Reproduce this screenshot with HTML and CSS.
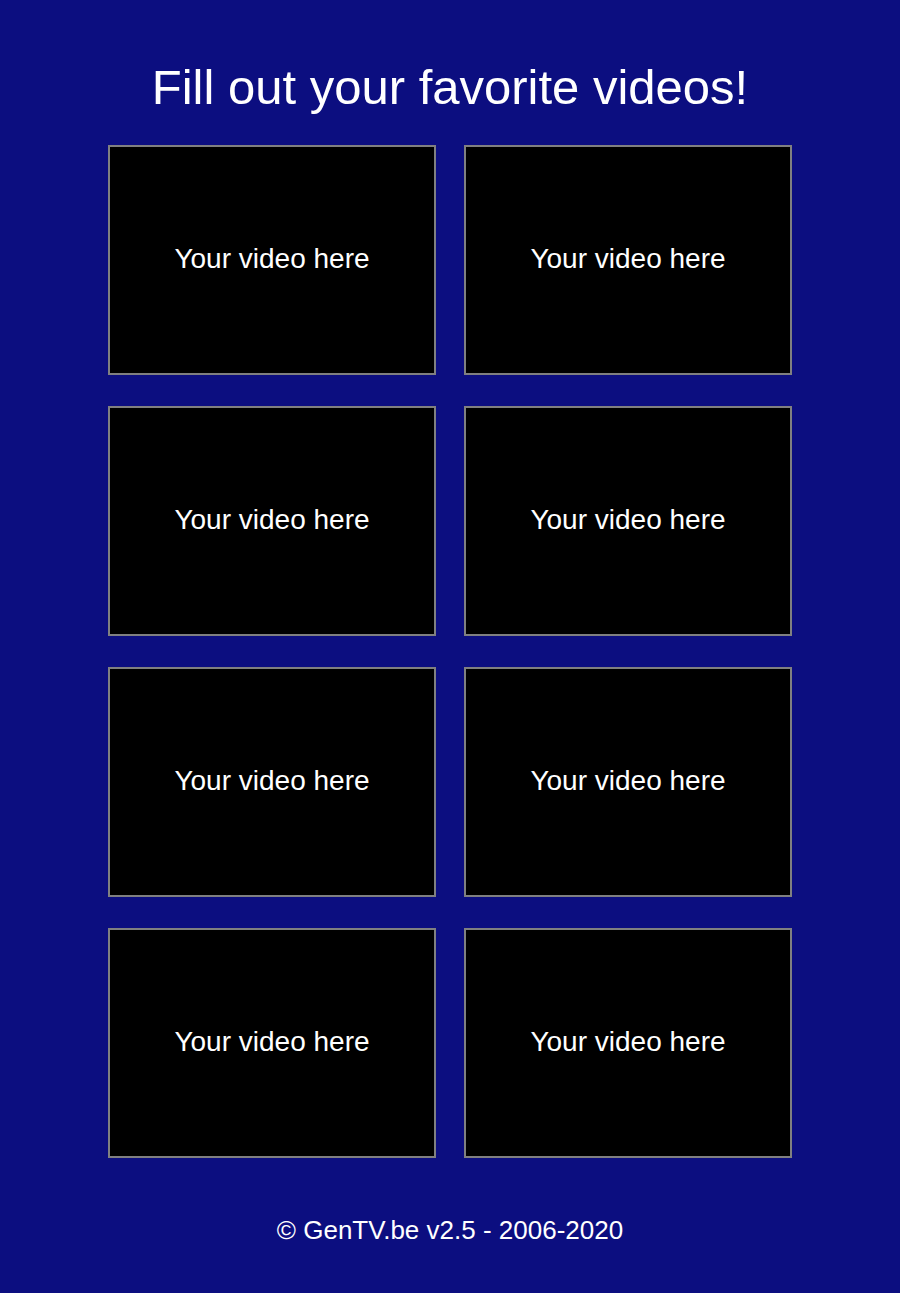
FILE: index.html
```html
<!DOCTYPE html>
<html lang="en">
<head>
<meta charset="utf-8">
<title>GenTV.be</title>
<link rel="stylesheet" href="styles.css">
</head>
<body>
<main class="page">
  <h1 class="title">Fill out your favorite videos!</h1>
  <section class="grid">
    <div class="video">Your video here</div>
    <div class="video">Your video here</div>
    <div class="video">Your video here</div>
    <div class="video">Your video here</div>
    <div class="video">Your video here</div>
    <div class="video">Your video here</div>
    <div class="video">Your video here</div>
    <div class="video">Your video here</div>
  </section>
  <footer class="footer">© GenTV.be v2.5 - 2006-2020</footer>
</main>
</body>
</html>
```

FILE: styles.css
```css
html, body {
  margin: 0;
  padding: 0;
}
body {
  background: #0c0e80;
  color: #ffffff;
  font-family: "Liberation Sans", Arial, sans-serif;
  min-height: 1293px;
}
.page {
  display: flex;
  flex-direction: column;
  align-items: center;
  padding-top: 60px;
}
.title {
  margin: 0;
  font-size: 49px;
  font-weight: normal;
  line-height: 55px;
  text-align: center;
}
.grid {
  margin-top: 30px;
  display: grid;
  grid-template-columns: 328px 328px;
  grid-auto-rows: 230px;
  column-gap: 28px;
  row-gap: 31px;
}
.video {
  box-sizing: border-box;
  background: #000000;
  border: 2px solid #808080;
  display: flex;
  align-items: center;
  justify-content: center;
  font-size: 28px;
  padding-bottom: 2px;
}
.footer {
  margin-top: 57px;
  font-size: 26px;
  line-height: 30px;
  text-align: center;
}
```
